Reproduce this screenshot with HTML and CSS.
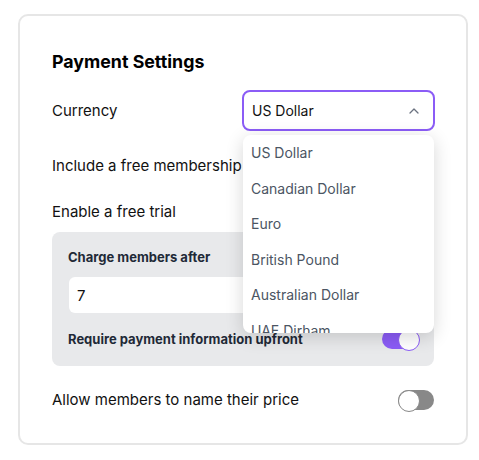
FILE: index.html
```html
<!DOCTYPE html>
<html lang="en">
<head>
    <meta charset="UTF-8">
    <title>Payment Settings</title>
    <link rel="stylesheet" href="styles.css">
</head>
<body>
    <div class="card">
        <h2>Payment Settings</h2>

        <div class="row row-currency">
            <span class="label">Currency</span>
            <div class="select-wrap">
                <div class="select">
                    <span>US Dollar</span>
                    <svg class="chevron" width="10" height="6" viewBox="0 0 10 6">
                        <path d="M1 5 L5 1 L9 5" fill="none" stroke="#6b7280" stroke-width="1.3" stroke-linecap="round" stroke-linejoin="round"/>
                    </svg>
                </div>
                <ul class="menu">
                    <li>US Dollar</li>
                    <li>Canadian Dollar</li>
                    <li>Euro</li>
                    <li>British Pound</li>
                    <li>Australian Dollar</li>
                    <li>UAE Dirham</li>
                    <li>Japanese Yen</li>
                </ul>
            </div>
        </div>

        <div class="row row-include">
            <span class="label">Include a free membership</span>
            <span class="toggle under"></span>
        </div>

        <div class="row row-trial">
            <span class="label">Enable a free trial</span>
            <span class="toggle on under"></span>
        </div>

        <div class="trial-box">
            <div class="sub-label">Charge members after</div>
            <div class="days-input">7</div>
            <div class="row sub-row">
                <span class="sub-label">Require payment information upfront</span>
                <span class="toggle on"></span>
            </div>
        </div>

        <div class="row row-price">
            <span class="label">Allow members to name their price</span>
            <span class="toggle"></span>
        </div>
    </div>
</body>
</html>
```

FILE: styles.css
```css
* {
    box-sizing: border-box;
}

body {
    font-family: 'Inter', 'Noto Sans', sans-serif;
    background-color: #fff;
    margin: 0;
    padding: 14px 11px 0 18px;
    color: #111;
}

.card {
    width: 450px;
    height: 431px;
    border: 2px solid #e6e6e6;
    border-radius: 10px;
    padding: 34px 32px 0 32px;
}

h2 {
    margin: 0;
    font-size: 17.8px;
    line-height: 24px;
    font-weight: 700;
    color: #000;
}

.row {
    display: flex;
    justify-content: space-between;
    align-items: center;
    height: 24px;
}

.label {
    font-size: 15px;
    line-height: 24px;
}

.row-currency {
    height: 41px;
    margin-top: 16px;
}

.row-include {
    margin-top: 23px;
}

.row-trial {
    margin-top: 22px;
}

.row-price {
    margin-top: 22px;
}

.select-wrap {
    position: relative;
    width: 193px;
    margin-right: -1px;
}

.select {
    height: 41px;
    border: 2px solid #8b5cf6;
    border-radius: 8px;
    display: flex;
    align-items: center;
    justify-content: space-between;
    padding: 0 14px 0 8px;
    font-size: 14px;
    color: #111;
}

.chevron {
    display: block;
}

.menu {
    position: absolute;
    top: 45px;
    left: 1px;
    width: 191px;
    height: 198px;
    margin: 0;
    padding: 0;
    list-style: none;
    background-color: #fff;
    border-radius: 8px;
    box-shadow: 0 4px 18px rgba(0, 0, 0, 0.16);
    overflow: hidden;
    z-index: 5;
}

.menu li {
    font-size: 14px;
    line-height: 20px;
    padding: 8px 8px 7.6px;
    color: #4b5563;
}

.toggle {
    position: relative;
    width: 36px;
    height: 20px;
    border-radius: 10px;
    background-color: #888;
    flex-shrink: 0;
}

.toggle.under {
    margin-right: 2px;
}

.toggle::after {
    content: "";
    position: absolute;
    top: 0;
    left: 0;
    width: 20px;
    height: 20px;
    border-radius: 50%;
    background-color: #fff;
    border: 1px solid #888;
}

.toggle.on {
    background-color: #8b5cf6;
}

.toggle.on::after {
    left: 16px;
    border-color: #8b5cf6;
}

.trial-box {
    margin-top: 8px;
    background-color: #e8e9eb;
    border-radius: 8px;
    padding: 16px 16px 17px 16px;
}

.sub-label {
    font-size: 13px;
    line-height: 18px;
    font-weight: 700;
    color: #1f2937;
}

.days-input {
    margin-top: 11px;
    margin-left: 1px;
    height: 36px;
    background-color: #fff;
    border-radius: 6px;
    padding: 0 8px;
    display: flex;
    align-items: center;
    font-size: 15px;
    color: #111;
}

.sub-row {
    margin-top: 16px;
    height: 20px;
}
```
